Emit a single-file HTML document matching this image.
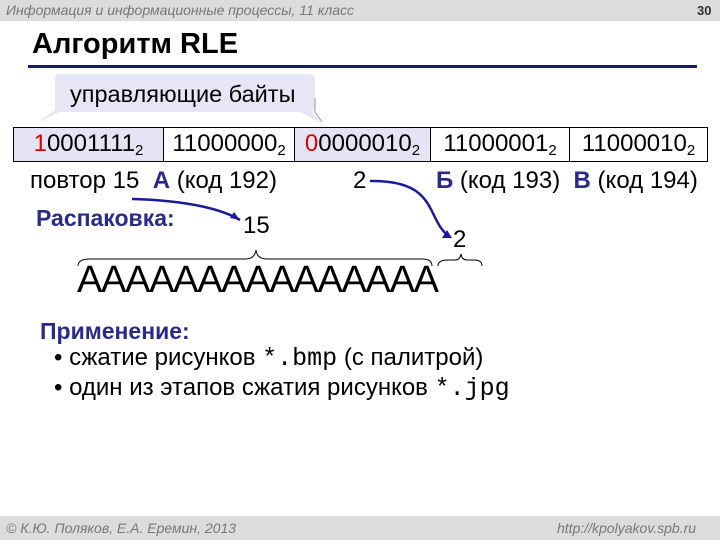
<!DOCTYPE html>
<html><head><meta charset="utf-8"><style>
body{margin:0;width:720px;height:540px;position:relative;background:#fff;font-family:"Liberation Sans",sans-serif;overflow:hidden}
.a{position:absolute;white-space:nowrap}
.hdr{left:0;top:0;width:720px;height:21px;background:#dcdcdc}
.ftr{left:0;top:516px;width:720px;height:24px;background:#dcdcdc}
.gi{font-style:italic;color:#777;font-size:14px}
table{position:absolute;left:13px;top:127px;border-collapse:collapse;font-size:24px;table-layout:fixed;width:694px}
td{border:1.5px solid #000;height:33px;padding:0;text-align:center}
td.h{background:#e4e4f4}
sub{font-size:15px;vertical-align:-4px}
.r{color:#d00}
.b{color:#2a2a8a;font-weight:bold}
.m{font-family:'Liberation Mono',monospace;font-size:25px}
</style></head><body>
<div class="a hdr"></div>
<div class="a gi" style="left:6px;top:2px">Информация и информационные процессы, 11 класс</div>
<div class="a" style="left:697px;top:3px;font-size:13px;font-weight:bold;color:#333">30</div>
<div class="a" style="left:32px;top:28px;font-size:29px;font-weight:bold">Алгоритм RLE</div>
<div class="a" style="left:28px;top:65px;width:669px;height:3px;background:#1a1a6a"></div>
<svg class="a" style="left:0;top:0" width="720" height="540">
<path d="M60 74 H310 Q315 74 315 79 V107 Q315 112 310 112 H312 L322 124 L300 112 H60 L38 122 L55 110 V79 Q55 74 60 74Z" fill="#e6e6f6"/>
<path d="M315 98 V112 L322 122" stroke="#999" fill="none"/>
<path d="M132 199 C170 200 215 205 240 220" stroke="#1a1a9a" stroke-width="2.5" fill="none"/>
<path d="M240 220 l-10 -2 l4 -6z" fill="#1a1a9a"/>
<path d="M370 181 C440 180 425 220 450 237" stroke="#1a1a9a" stroke-width="2.5" fill="none"/>
<path d="M452 238 l-10 0 l5 -8z" fill="#1a1a9a"/>
<path d="M78 266 Q78 259 90 259 H245 Q255 259 256 250 Q257 259 267 259 H422 Q432 259 432 266" stroke="#000" fill="none"/>
<path d="M438 266 Q438 260 448 260 H455 Q460 260 461 254 Q462 260 467 260 H474 Q482 260 482 266" stroke="#000" fill="none"/>
</svg>
<div class="a" style="left:70px;top:81px;font-size:23.5px">управляющие байты</div>
<table><colgroup><col style="width:150px"><col style="width:131px"><col style="width:136px"><col style="width:139px"><col style="width:138px"></colgroup><tr>
<td class="h"><span class="r">1</span>0001111<sub>2</sub></td>
<td>11000000<sub>2</sub></td>
<td class="h"><span class="r">0</span>0000010<sub>2</sub></td>
<td>11000001<sub>2</sub></td>
<td>11000010<sub>2</sub></td>
</tr></table>
<div class="a" style="left:30px;top:167px;font-size:24px">повтор 15 &nbsp;<span class="b">А</span> (код 192)</div>
<div class="a" style="left:353px;top:167px;font-size:24px">2</div>
<div class="a" style="left:436px;top:167px;font-size:24px"><span class="b">Б</span> (код 193) &nbsp;<span class="b">В</span> (код 194)</div>
<div class="a b" style="left:36px;top:205px;font-size:23px">Распаковка:</div>
<div class="a" style="left:243px;top:212px;font-size:24px">15</div>
<div class="a" style="left:453px;top:226px;font-size:24px">2</div>
<div class="a" style="left:77px;top:259px;font-size:38px;letter-spacing:-1.3px">AAAAAAAAAAAAAAA</div>
<div class="a b" style="left:40px;top:318px;font-size:23px">Применение:</div>
<div class="a" style="left:54px;top:344px;font-size:24px">• сжатие рисунков <span class="m">*.bmp</span> (с палитрой)</div>
<div class="a" style="left:54px;top:374px;font-size:24px">• один из этапов сжатия рисунков <span class="m">*.jpg</span></div>
<div class="a ftr"></div>
<div class="a gi" style="left:6px;top:520px">© К.Ю. Поляков, Е.А. Еремин, 2013</div>
<div class="a gi" style="left:557px;top:520px">http://kpolyakov.spb.ru</div>
</body></html>
